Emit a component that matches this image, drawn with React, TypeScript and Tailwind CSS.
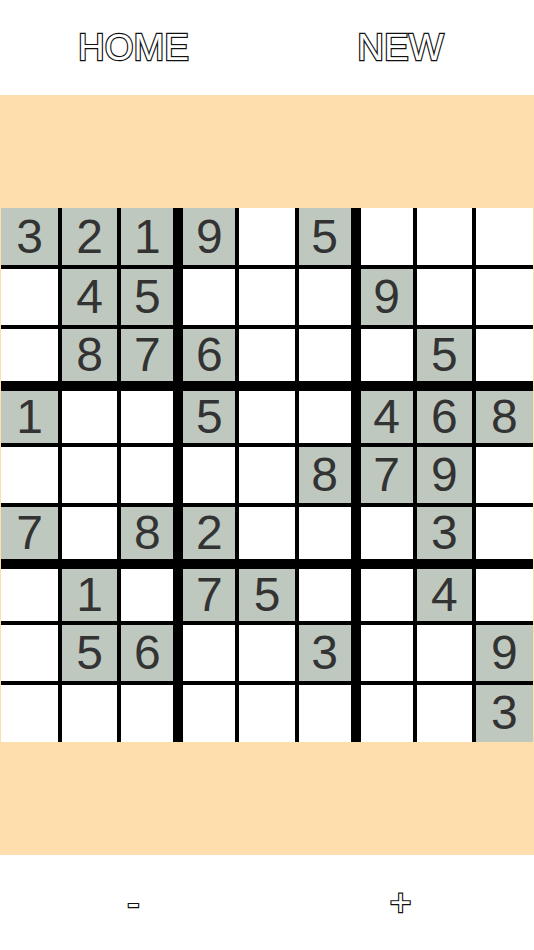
import React from "react";

const puzzle = [
  "3219.5...",
  ".45...9..",
  ".876...5.",
  "1..5..468",
  ".....879.",
  "7.82...3.",
  ".1.75..4.",
  ".56..3..9",
  "........3",
];

const leftBorder = ["", "border-l-2", "border-l-2", "border-l-[5px]", "border-l-2", "border-l-2", "border-l-[5px]", "border-l-2", "border-l-2"];
const rightBorder = ["border-r-2", "border-r-2", "border-r-[5px]", "border-r-2", "border-r-2", "border-r-[5px]", "border-r-2", "border-r-2", ""];
const topBorder = ["", "border-t-2", "border-t-2", "border-t-[5px]", "border-t-2", "border-t-2", "border-t-[5px]", "border-t-2", "border-t-2"];
const bottomBorder = ["border-b-2", "border-b-2", "border-b-[5px]", "border-b-2", "border-b-2", "border-b-[5px]", "border-b-2", "border-b-2", ""];

const outline =
  "font-['Liberation_Sans',Arial,sans-serif] text-[37px] leading-none text-white [-webkit-text-stroke:2.4px_#111] [paint-order:stroke_fill]";

function Cell({ value, row, col }: { value: string; row: number; col: number }) {
  const given = value !== ".";
  return (
    <div
      className={`flex items-center justify-center border-black ${leftBorder[col]} ${rightBorder[col]} ${topBorder[row]} ${bottomBorder[row]} ${
        given ? "bg-[#bfc8bf]" : "bg-white"
      }`}
    >
      {given && (
        <span className="font-['Liberation_Sans',Arial,sans-serif] text-[48px] leading-none text-[#333]">
          {value}
        </span>
      )}
    </div>
  );
}

export default function App() {
  return (
    <div className="w-[534px] h-[950px] flex flex-col bg-white">
      {/* ── Header ── */}
      <div className="h-[95px] grid grid-cols-2 items-center">
        <button className={`${outline} text-center`}>HOME</button>
        <button className={`${outline} text-center`}>NEW</button>
      </div>

      {/* ── Board ── */}
      <div className="h-[760px] bg-[#ffdead] flex flex-col justify-center">
        <div className="mx-px h-[534px] grid grid-cols-9 grid-rows-9">
          {puzzle.map((line, r) =>
            line.split("").map((v, c) => <Cell key={`${r}-${c}`} value={v} row={r} col={c} />)
          )}
        </div>
      </div>

      {/* ── Footer ── */}
      <div className="h-[95px] grid grid-cols-2 items-center">
        <button className={`${outline} text-center`}>-</button>
        <button className={`${outline} text-center`}>+</button>
      </div>
    </div>
  );
}
